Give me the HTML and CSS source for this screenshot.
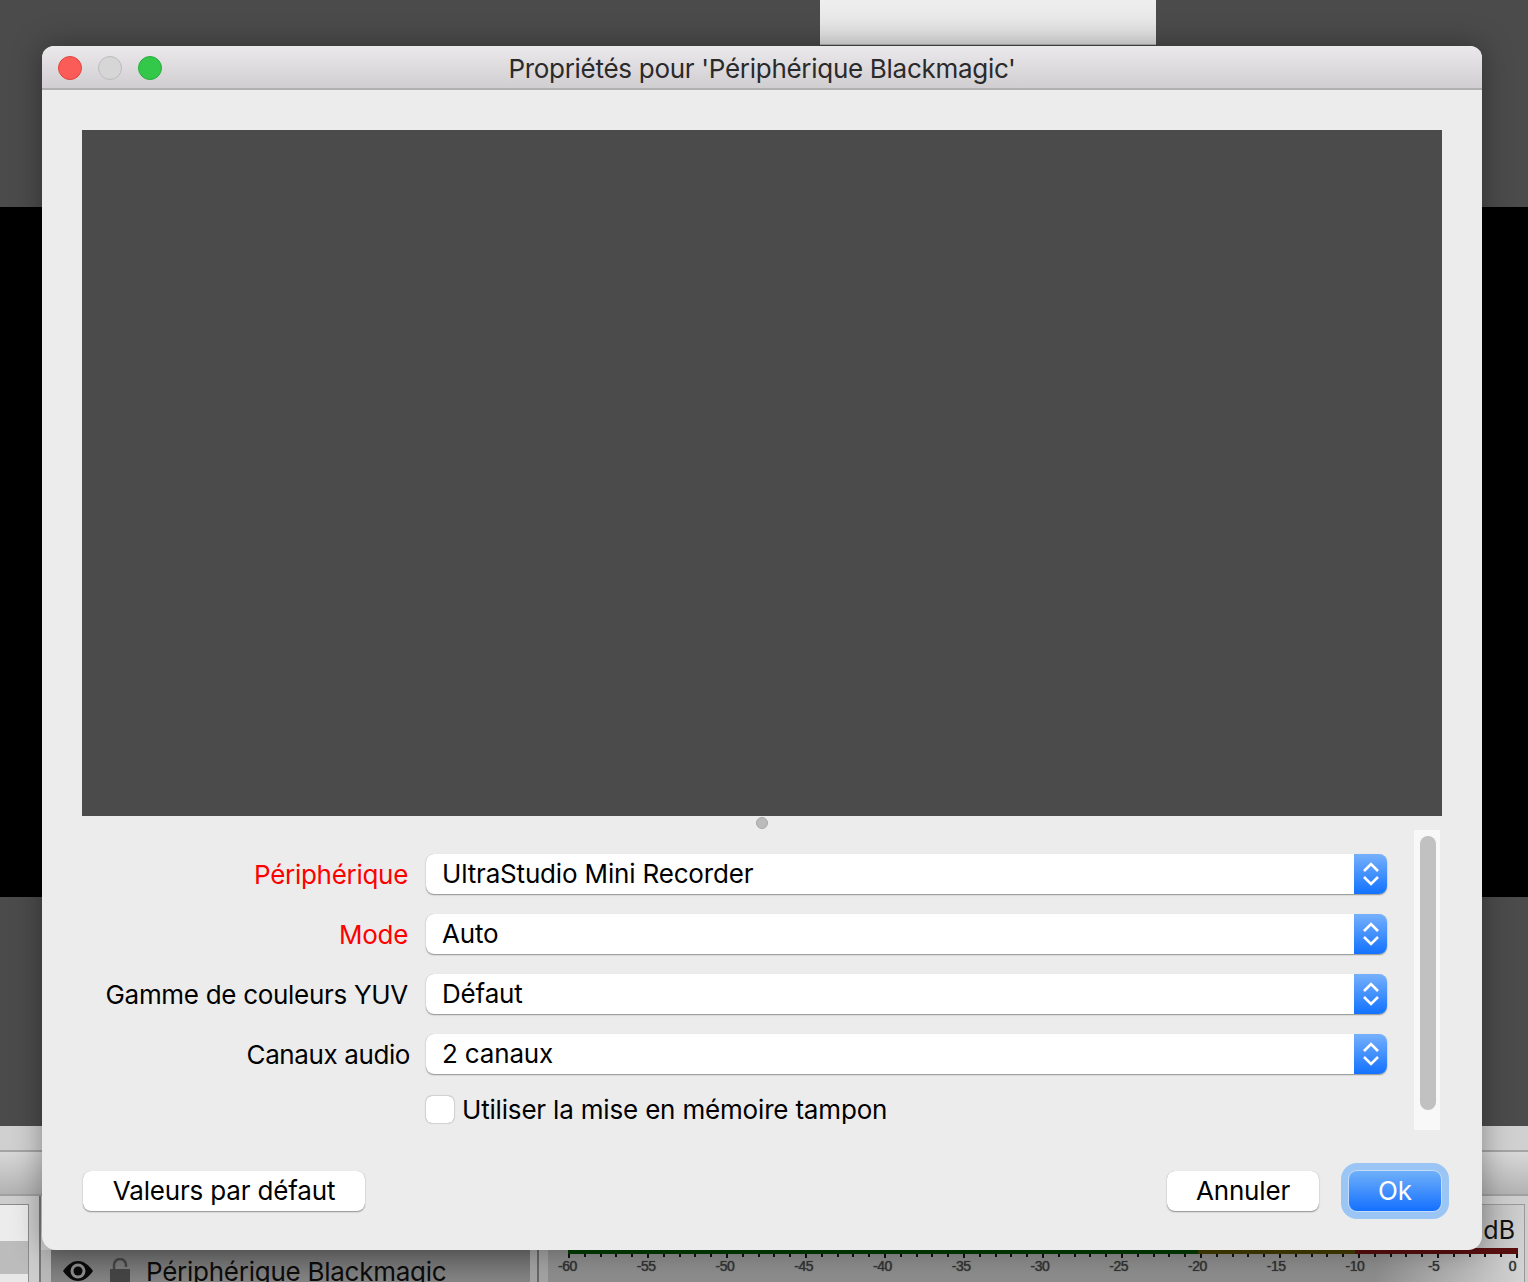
FILE: index.html
```html
<!DOCTYPE html>
<html lang="fr">
<head>
<meta charset="utf-8">
<title>Propriétés pour 'Périphérique Blackmagic'</title>
<link rel="stylesheet" href="styles.css">
</head>
<body>
<div class="desktop">
  <div class="back-top"><div class="back-tab"></div></div>
  <div class="back-black"></div>
  <div class="back-dark"></div>
  <div class="back-bottom">
    <div class="back-band"></div>
    <div class="back-toolbar"></div>
    <div class="back-panels">
      <div class="back-left">
        <div class="back-list"></div>
      </div>
      <div class="back-mid">
        <div class="back-source">
          <svg class="eye" viewBox="0 0 32 22"><path d="M1 11C6 4 11 1 16 1s10 3 15 10c-5 7-10 10-15 10S6 18 1 11z" fill="#0a0a0a"/><circle cx="16" cy="11" r="7.500" fill="#8a8a8a"/><circle cx="16" cy="11" r="4.500" fill="#0a0a0a"/></svg>
          <svg class="lock" viewBox="0 0 22 26"><path d="M5 12V7a6 6 0 0 1 12 0v2" fill="none" stroke="#444" stroke-width="2.500"/><rect x="1" y="11" width="20" height="15" fill="#444"/></svg>
          <span class="source-name">Périphérique Blackmagic</span>
        </div>
      </div>
      <div class="back-mixer">
        <div class="db">dB</div>
        <div class="meter">
          <div class="meter-bar"><span class="m-green"></span><span class="m-yellow"></span><span class="m-red"></span></div>
          <div class="ticks"></div>
          <div class="scale">
            <span>-60</span><span>-55</span><span>-50</span><span>-45</span><span>-40</span><span>-35</span><span>-30</span><span>-25</span><span>-20</span><span>-15</span><span>-10</span><span>-5</span><span>0</span>
          </div>
        </div>
      </div>
    </div>
  </div>

  <section class="window">
    <header class="titlebar">
      <div class="lights">
        <span class="light red"></span><span class="light grey"></span><span class="light green"></span>
      </div>
      <h1 class="title">Propriétés pour 'Périphérique Blackmagic'</h1>
    </header>
    <div class="content">
      <div class="preview"></div>
      <div class="splitter"><span class="handle"></span></div>
      <div class="props">
        <div class="form">
          <div class="row">
            <label class="label changed">Périphérique</label>
            <div class="select"><span class="value">UltraStudio Mini Recorder</span><span class="stepper"><svg viewBox="0 0 16 28"><path d="M1 11 8 4l7 7M1 17l7 7 7-7" fill="none" stroke="#fff" stroke-width="2.600"/></svg></span></div>
          </div>
          <div class="row">
            <label class="label changed">Mode</label>
            <div class="select"><span class="value">Auto</span><span class="stepper"><svg viewBox="0 0 16 28"><path d="M1 11 8 4l7 7M1 17l7 7 7-7" fill="none" stroke="#fff" stroke-width="2.600"/></svg></span></div>
          </div>
          <div class="row">
            <label class="label">Gamme de couleurs YUV</label>
            <div class="select"><span class="value">Défaut</span><span class="stepper"><svg viewBox="0 0 16 28"><path d="M1 11 8 4l7 7M1 17l7 7 7-7" fill="none" stroke="#fff" stroke-width="2.600"/></svg></span></div>
          </div>
          <div class="row">
            <label class="label wide">Canaux audio</label>
            <div class="select"><span class="value">2 canaux</span><span class="stepper"><svg viewBox="0 0 16 28"><path d="M1 11 8 4l7 7M1 17l7 7 7-7" fill="none" stroke="#fff" stroke-width="2.600"/></svg></span></div>
          </div>
          <div class="check-row">
            <span class="checkbox"></span><span class="check-label">Utiliser la mise en mémoire tampon</span>
          </div>
        </div>
        <div class="scrollbar"><div class="thumb"></div></div>
      </div>
      <footer class="actions">
        <button class="btn btn-defaults">Valeurs par défaut</button>
        <div class="actions-right">
          <button class="btn btn-cancel">Annuler</button>
          <button class="btn btn-ok">Ok</button>
        </div>
      </footer>
    </div>
  </section>
</div>
</body>
</html>
```
FILE: styles.css
```css
* { box-sizing: border-box; }
html, body { margin: 0; padding: 0; }
body { background: #000; font-family: Inter, "Liberation Sans", sans-serif; color: #000; }

.desktop { position: relative; width: 1528px; height: 1282px; overflow: hidden; }

.back-top { height: 207px; background: #4b4b4b; display: flex; justify-content: center; padding-left: 448px; }
.back-tab { width: 336px; height: 45px; background: linear-gradient(#eeeeee, #e2e2e2); border-bottom: 1px solid #b8b8b8; }
.back-black { height: 690px; background: #000; }
.back-dark { height: 229px; background: #4b4b4b; }
.back-bottom { height: 156px; background: #cdcdcd; display: flex; flex-direction: column; }
.back-band { flex: none; height: 26px; background: #d0d0d0; border-bottom: 2px solid #a4a4a4; }
.back-toolbar { flex: none; height: 44px; background: linear-gradient(#d8d8d8, #b2b2b2); border-bottom: 2px solid #a0a0a0; }
.back-panels { flex: 1; display: flex; min-height: 0; padding-right: 3px; }
.back-left { width: 41px; flex: none; padding: 8px 10px 0 0; border-right: 2px solid #777; }
.back-list {
  height: 100%; border: 1px solid #8c8c8c; border-left: 0; border-bottom: 0;
  background: linear-gradient(#ececec 0 36px, #bcbcbc 36px 69px, #e8e8e8 69px);
}
.back-mid { width: 489px; flex: none; padding-top: 54px; }
.back-source {
  display: flex; align-items: center; height: 42px; padding-left: 11px;
  background: linear-gradient(#6a6a6a, #8c8c8c); border-left: 10px solid #b8b8b8;
}
.eye { width: 32px; height: 22px; flex: none; }
.lock { width: 22px; height: 26px; flex: none; margin-left: 15px; }
.source-name { margin-left: 15px; font-size: 26px; letter-spacing: -0.26px; white-space: nowrap; color: #0c0c0c; }
.back-mixer {
  flex: 1; position: relative; margin-top: 8px;
  border-top: 1px solid #999; border-right: 1px solid #999;
  background:
    linear-gradient(90deg, #a2a2a2 0 7px, #666 7px 9px, #a2a2a2 9px 18px, transparent 18px),
    linear-gradient(100deg, #8c8c8c 85%, #d4d4d4 100%);
}
.db { position: absolute; top: 10px; right: 9px; font-size: 25px; line-height: 30px; color: #111; }
.meter { position: absolute; left: 38px; top: 43px; width: 950px; height: 34px; }
.meter-bar { display: flex; height: 6px; }
.m-green { width: 630px; background: #003c00; }
.m-yellow { width: 157px; background: #443c00; }
.m-red { flex: 1; background: #5a0f0f; }
.ticks {
  height: 4px;
  width: 950px;
  background:
    repeating-linear-gradient(90deg, #111 0 2px, transparent 2px 79px),
    repeating-linear-gradient(90deg, #111 0 2px, transparent 2px 15.800px) 0 0 / 100% 3px no-repeat;
}
.scale {
  display: flex; margin: 0 0 0 -40px; width: 1027px;
  font-family: "Liberation Sans", sans-serif; font-size: 14px; line-height: 16px;
  color: #333; letter-spacing: -0.5px; text-shadow: 0 0 1px #333;
}
.scale span { flex: 0 0 78.750px; text-align: center; }

.window {
  position: absolute; left: 42px; top: 46px; width: 1440px; height: 1204px;
  border-radius: 12px 12px 14px 14px; background: #ececec; overflow: hidden;
  box-shadow: 0 0 30px rgba(0,0,0,.35);
  display: flex; flex-direction: column;
}
.titlebar {
  position: relative; height: 44px; flex: none;
  background: linear-gradient(#ebe9eb, #d0ced0);
  border-bottom: 2px solid #b1afb1;
  display: flex; align-items: flex-start; justify-content: center;
}
.lights { position: absolute; left: 16px; top: 10px; display: flex; gap: 16px; }
.light { width: 24px; height: 24px; border-radius: 50%; border: 1px solid; }
.red { background: #fc5c57; border-color: #e0443e; }
.grey { background: #d6d6d6; border-color: #bcbcbc; }
.green { background: #34c84a; border-color: #2aac3d; }
.title { margin: 0; font-size: 26px; line-height: 45px; font-weight: 400; letter-spacing: -0.29px; color: #2b2a2b; }

.content { flex: 1; display: flex; flex-direction: column; padding: 40px 40px 0; min-height: 0; }
.preview { height: 686px; background: #4b4b4b; flex: none; }
.splitter { height: 14px; display: flex; justify-content: center; align-items: center; flex: none; }
.handle { width: 12px; height: 12px; border-radius: 50%; background: #bbb; border: 1px solid #a8a8a8; }
.props { height: 300px; display: flex; flex: none; justify-content: space-between; }
.form { width: 1305px; padding-top: 24px; display: flex; flex-direction: column; gap: 20px; }
.row { display: flex; align-items: flex-start; height: 40px; }
.label { width: 326px; text-align: right; font-size: 26px; line-height: 42px; letter-spacing: -0.3px; white-space: nowrap; flex: none; }
.label.changed { color: #ff0000; }
.label.wide { width: 328px; margin-right: -2px; letter-spacing: -0.4px; }
.select {
  margin-left: 18px; flex: 1; height: 40px; display: flex; background: #fff; border-radius: 8px;
  box-shadow: 0 1px 1.500px rgba(0,0,0,.4), 0 0 .5px rgba(0,0,0,.3);
  overflow: hidden;
}
.value { flex: 1; padding-left: 16px; font-size: 26px; line-height: 40px; letter-spacing: -0.17px; }
.stepper { width: 33px; flex: none; background: linear-gradient(#76b0fb, #1272ff); display: flex; align-items: center; justify-content: center; }
.stepper svg { width: 16px; height: 28px; }
.check-row { display: flex; align-items: center; margin-left: 344px; margin-top: 1px; height: 28px; }
.checkbox { width: 28px; height: 27px; border-radius: 6px; background: #fff; box-shadow: 0 0 1.500px rgba(0,0,0,.55); flex: none; }
.check-label { margin-left: 8px; font-size: 26px; letter-spacing: -0.18px; white-space: nowrap; }
.scrollbar { width: 26px; height: 300px; margin-right: 2px; background: #f8f8f8; padding: 6px 4px 6px 6px; flex: none; }
.thumb { width: 16px; height: 274px; border-radius: 8px; background: #c1c1c1; }

.actions { display: flex; justify-content: space-between; align-items: flex-start; padding: 41px 1px 0 1px; }
.actions-right { display: flex; gap: 30px; }
.btn {
  height: 40px; border: 0; padding: 0; background: #fff; border-radius: 8px; font-family: inherit; font-size: 26px; line-height: 40px; letter-spacing: -0.17px; color: #000;
  box-shadow: 0 1px 1.500px rgba(0,0,0,.4), 0 0 .5px rgba(0,0,0,.3);
}
.btn-defaults { width: 282px; }
.btn-cancel { width: 152px; }
.btn-ok {
  width: 92px; color: #fff; background: linear-gradient(#6fb0fa, #1470ff);
  box-shadow: 0 0 0 1px rgba(255,255,255,.4), 0 0 0 8px #9bc5f5;
}
```
